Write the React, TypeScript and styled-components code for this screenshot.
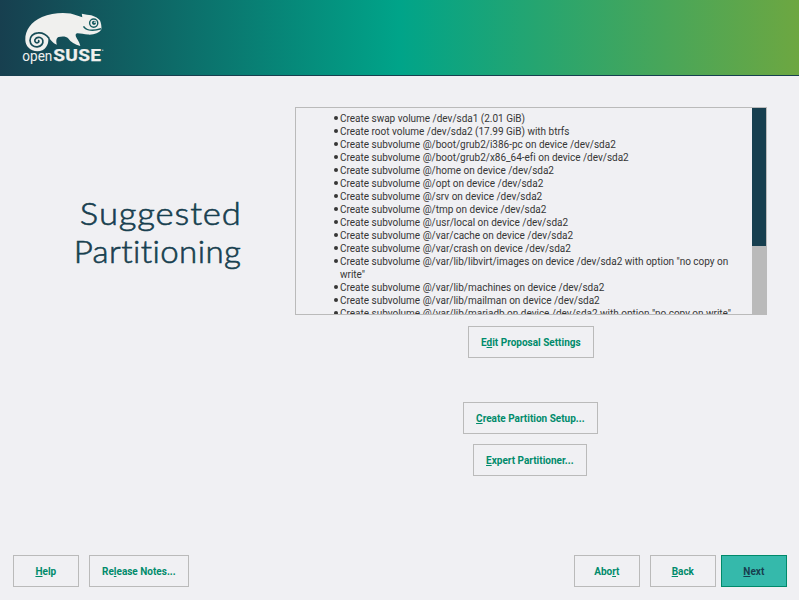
import React from "react";
import styled, { createGlobalStyle } from "styled-components";

const GlobalStyle = createGlobalStyle`
  * { box-sizing: border-box; }
  body { margin: 0; background: #f0f0f3; font-family: Roboto, "Liberation Sans", sans-serif; }
`;

const Screen = styled.div`
  width: 799px;
  height: 600px;
  display: flex;
  flex-direction: column;
  overflow: hidden;
  background: #f0f0f3;
`;

const Header = styled.header`
  height: 76px;
  flex: none;
  border-bottom: 1px solid #173f4f;
  background: linear-gradient(90deg, #173f4f 0%, #00a489 50%, #6da741 100%);
`;

const Logo = styled.svg`
  display: block;
`;

const Content = styled.main`
  display: grid;
  grid-template-columns: 241px 472px;
  column-gap: 54px;
  padding-top: 31px;
  height: 479px;
`;

const Title = styled.h1`
  margin: 87px 0 0;
  font: 300 31.5px/38px Lato, sans-serif;
  color: #173f4f;
  -webkit-text-stroke: 0.6px #173f4f;
  text-align: right;
`;

const TitleLine = styled.span<{ $spacing: number; $stretch: number }>`
  display: block;
  letter-spacing: ${(p) => p.$spacing}px;
  margin-right: ${(p) => -p.$spacing}px;
  transform: scaleX(${(p) => p.$stretch});
  transform-origin: right;
`;

const Panel = styled.section`
  display: flex;
  flex-direction: column;
  align-items: center;
`;

const Summary = styled.div`
  width: 472px;
  height: 208px;
  flex: none;
  display: flex;
  border: 1px solid #bababa;
  overflow: hidden;
`;

const List = styled.ul`
  flex: 1;
  min-width: 0;
  margin: 0;
  padding: 4px 10px 0 44px;
  list-style: none;
  color: #363636;
  font-size: 10px;
  line-height: 13px;
`;

const Item = styled.li`
  position: relative;
  white-space: pre;
  letter-spacing: -0.01px;
  &::before {
    content: "";
    position: absolute;
    left: -6px;
    top: 4px;
    width: 4px;
    height: 4px;
    border-radius: 50%;
    background: #363636;
  }
`;

const ScrollTrack = styled.div`
  width: 15px;
  margin-right: -1px;
  background: #bababa;
`;

const ScrollThumb = styled.div`
  width: 14px;
  height: 138px;
  background: #173f4f;
`;

const Button = styled.button<{ $width: number; $top?: number; $left?: number; $right?: number; $primary?: boolean }>`
  width: ${(p) => p.$width}px;
  height: 32px;
  flex: none;
  margin: ${(p) => p.$top ?? 0}px ${(p) => p.$right ?? 0}px 0 ${(p) => p.$left ?? 0}px;
  padding: 0 0.4px 0 0;
  border: 1px solid ${(p) => (p.$primary ? "#00896a" : "#bababa")};
  background: ${(p) => (p.$primary ? "#35b9ab" : "transparent")};
  color: ${(p) => (p.$primary ? "#173f4f" : "#008b6b")};
  font: 700 10px/13px Roboto, sans-serif;
  white-space: nowrap;
  u { text-decoration-thickness: 1px; text-underline-offset: 1px; text-decoration-skip-ink: none; }
`;

const Footer = styled.footer`
  display: flex;
  height: 45px;
  padding: 0 12px 0 13px;
`;

const Spacer = styled.div`
  flex: 1;
`;

const rows = [
  "Create swap volume /dev/sda1 (2.01 GiB)",
  "Create root volume /dev/sda2 (17.99 GiB) with btrfs",
  "Create subvolume @/boot/grub2/i386-pc on device /dev/sda2",
  "Create subvolume @/boot/grub2/x86_64-efi on device /dev/sda2",
  "Create subvolume @/home on device /dev/sda2",
  "Create subvolume @/opt on device /dev/sda2",
  "Create subvolume @/srv on device /dev/sda2",
  "Create subvolume @/tmp on device /dev/sda2",
  "Create subvolume @/usr/local on device /dev/sda2",
  "Create subvolume @/var/cache on device /dev/sda2",
  "Create subvolume @/var/crash on device /dev/sda2",
  'Create subvolume @/var/lib/libvirt/images on device /dev/sda2 with option "no copy on\nwrite"',
  "Create subvolume @/var/lib/machines on device /dev/sda2",
  "Create subvolume @/var/lib/mailman on device /dev/sda2",
  'Create subvolume @/var/lib/mariadb on device /dev/sda2 with option "no copy on write"',
];

function OpenSuseLogo() {
  return (
    <Logo width="130" height="75" viewBox="0 0 130 75" role="img" aria-label="openSUSE">
      <path
        fill="#f0f0ee"
        d="M25.3 40C25 30 31 22 42 17C53 12.5 68 11.5 77 15.5L82.3 17.3L81.8 13.8L87 14.7C93 15 98 17.5 100 20.5C101 23 101.8 26.5 101.3 29.5C99 33 94 35 88 34.6C84 34 80 33 77 33.2C74.5 34 76 37 77.5 39.5C79 42 79.7 43.5 80.3 46C75 44.5 70.5 42 68.3 38.5C66 36 62 36.3 58.5 37C56 38.5 56 41 56.8 44.7C52.5 43 50.8 39 48.3 38.2C49 45 45 51.2 37.5 51.2C30 51.2 25.5 46 25.3 40Z"
      />
      <path
        fill="none"
        stroke="#174c57"
        strokeWidth="1.7"
        strokeLinecap="round"
        d="M49 38.2C46.5 35 43 32.4 38 32.9C33 33.2 29.9 36.8 30 40.5C30.2 44.7 33.5 47 37.3 46.8C41.3 46.5 43.5 43.5 42.8 40.3C42 37.4 38.4 36.5 36 38.3C33.9 40 34.7 42.7 37 42.8C38.6 42.8 39.2 41.5 38.7 40.6"
      />
      <circle cx="93.7" cy="23.1" r="4.1" fill="none" stroke="#135b60" strokeWidth="1.4" />
      <circle cx="94" cy="22.8" r="2.1" fill="#135b60" />
      <ellipse cx="94.8" cy="22.2" rx="1.1" ry=".6" fill="#f0f0ee" />
      <path d="M83.5 26.3C86 30.5 93 31.2 101 28.7" fill="none" stroke="#135b60" strokeWidth="1.5" />
      <text x="22.3" y="61.3" fill="#f0f0ee" fontFamily="Roboto" fontSize="14.5" textLength="30" lengthAdjust="spacingAndGlyphs">open</text>
      <text x="53.2" y="61.3" fill="#f0f0ee" stroke="#f0f0ee" strokeWidth=".25" fontFamily="Roboto" fontWeight="700" fontSize="16.5" letterSpacing=".3" textLength="48.2" lengthAdjust="spacingAndGlyphs">SUSE</text>
      <circle cx="102.8" cy="50.3" r=".7" fill="#a8c5c5" />
    </Logo>
  );
}

export default function App() {
  return (
    <>
      <GlobalStyle />
      <Screen>
        <Header><OpenSuseLogo /></Header>
        <Content>
          <Title>
            <TitleLine $spacing={0.8} $stretch={1.1}>Suggested</TitleLine>
            <TitleLine $spacing={0.4} $stretch={1.05}>Partitioning</TitleLine>
          </Title>
          <Panel>
            <Summary>
              <List>{rows.map((r) => <Item key={r}>{r}</Item>)}</List>
              <ScrollTrack><ScrollThumb /></ScrollTrack>
            </Summary>
            <Button $width={126} $top={11}>E<u>d</u>it Proposal Settings</Button>
            <Button $width={135} $top={44} $right={1}><u>C</u>reate Partition Setup...</Button>
            <Button $width={114} $top={10} $right={2}><u>E</u>xpert Partitioner...</Button>
          </Panel>
        </Content>
        <Footer>
          <Button $width={66}><u>H</u>elp</Button>
          <Button $width={100} $left={10}>Re<u>l</u>ease Notes...</Button>
          <Spacer />
          <Button $width={66}>Abo<u>r</u>t</Button>
          <Button $width={66} $left={10}><u>B</u>ack</Button>
          <Button $width={66} $left={5} $primary><u>N</u>ext</Button>
        </Footer>
      </Screen>
    </>
  );
}
